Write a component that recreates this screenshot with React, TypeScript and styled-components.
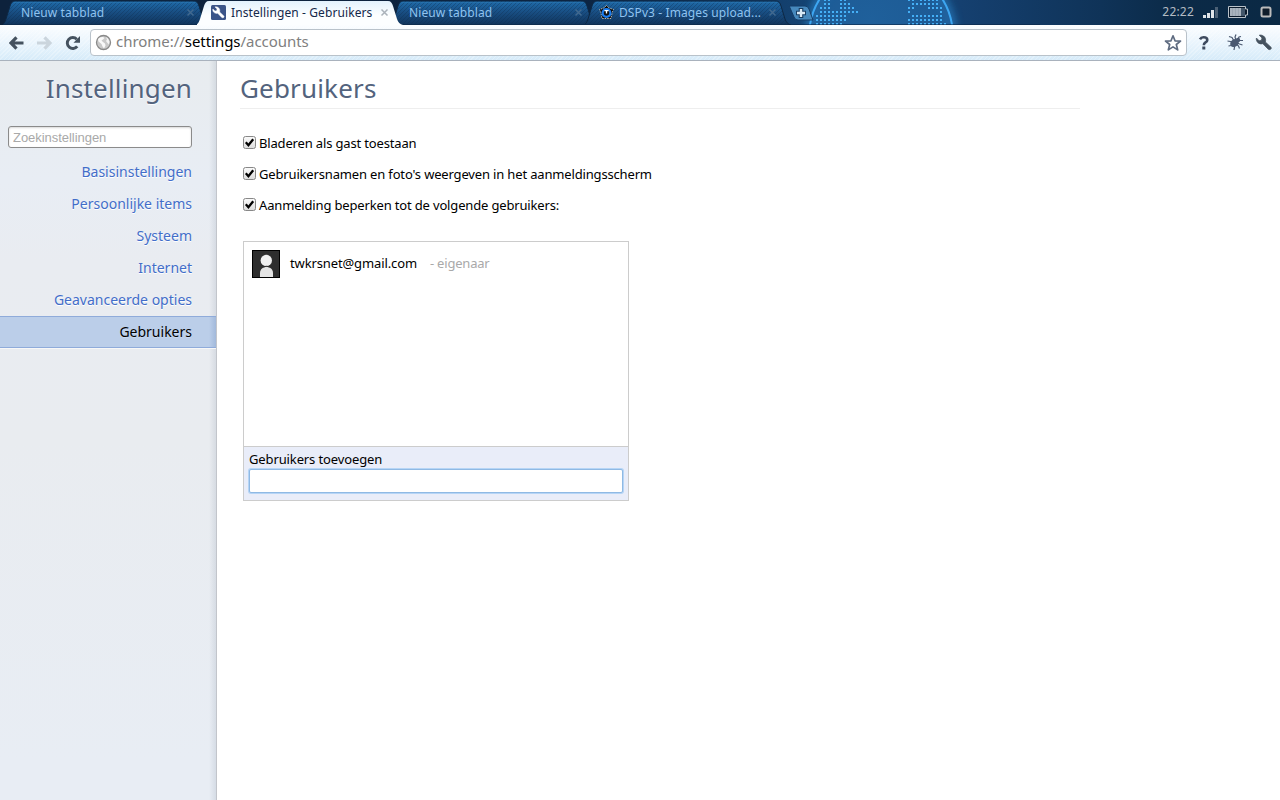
import React from "react";
import styled, { createGlobalStyle, css } from "styled-components";

const GlobalStyle = createGlobalStyle`
  * { box-sizing: border-box; }
  html, body { margin: 0; padding: 0; background: #fff; }
  body { font-family: "Noto Sans", sans-serif; font-size: 13px; color: #000; overflow: hidden; }
`;

const Window = styled.div`
  width: 1280px;
  height: 800px;
  display: flex;
  flex-direction: column;
`;

const TabStrip = styled.header`
  position: relative;
  flex: none;
  height: 25px;
  display: flex;
  align-items: flex-start;
  padding: 0 8px 0 3px;
  overflow: hidden;
  background: linear-gradient(90deg, #0d223c 0%, #0c2340 45%, #123c68 59%, #16487a 66%, #154070 75%, #0f3358 86%, #0b2a47 92%, #0b2944 100%);
`;

const Globe = styled.svg`
  position: absolute;
  left: 780px;
  top: 0;
`;

const TabBox = styled.div<{ $active?: boolean }>`
  position: relative;
  z-index: ${(p) => (p.$active ? 2 : 1)};
  flex: none;
  width: 206px;
  height: 25px;
  margin-right: -12px;
  padding: 0 14px 0 18px;
  display: flex;
  align-items: center;
  color: ${(p) => (p.$active ? "#14284a" : "#8fc3f0")};
`;

const TabShape = styled.svg`
  position: absolute;
  left: 0;
  top: 0;
`;

const TabIcon = styled.svg`
  position: relative;
  flex: none;
  margin: 0 5px 0 -4px;
`;

const TabTitle = styled.span`
  position: relative;
  flex: 1;
  white-space: nowrap;
  font-size: 12px;
  line-height: 24px;
  letter-spacing: 0.1px;
`;

const CloseIcon = styled.svg`
  position: relative;
  flex: none;
`;

const NewTab = styled.svg`
  position: relative;
  flex: none;
  margin: 5px 0 0 9px;
`;

const Status = styled.div`
  position: relative;
  margin-left: auto;
  height: 24px;
  display: flex;
  align-items: center;
  color: #b4bcc4;
  font-size: 12px;
  line-height: 24px;
  letter-spacing: 0.2px;
`;

const StatusIcon = styled.svg<{ $gap: number }>`
  flex: none;
  margin-left: ${(p) => p.$gap}px;
`;

const Toolbar = styled.div`
  flex: none;
  height: 36px;
  display: flex;
  align-items: center;
  border-bottom: 1px solid #a9b2bd;
  background: repeating-linear-gradient(135deg, rgba(255,255,255,0.25) 0 1px, transparent 1px 3px),
    linear-gradient(#fbfdff, #eaf5fd 50%, #d6ebf9);
  padding: 0 7px 0 9px;
`;

const ToolIcon = styled.svg<{ $left?: number; $right?: number }>`
  flex: none;
  margin: 0 ${(p) => p.$right ?? 0}px 0 ${(p) => p.$left ?? 0}px;
`;

const Omnibox = styled.div`
  flex: none;
  width: 1097px;
  height: 27px;
  display: flex;
  align-items: center;
  padding: 0 4px;
  background: #fff;
  border: 1px solid #b9c2ca;
  border-radius: 4px;
`;

const Url = styled.div`
  flex: 1;
  margin: -3px 0 0 4px;
  font-size: 15px;
  line-height: 24px;
  letter-spacing: -0.04px;
  color: #808080;
  b { font-weight: 400; color: #000; }
`;

const Page = styled.div`
  flex: 1;
  display: flex;
  min-height: 0;
`;

const Sidebar = styled.nav`
  flex: none;
  width: 217px;
  border-right: 1px solid #c2c5cb;
  background: linear-gradient(90deg, transparent 209px, rgba(120,135,155,0.17) 216px),
    linear-gradient(#e8ecef, #e8edf4 120px, #e9ecf1 200px, #e9ecf0 380px, #e8edf4 700px);
  text-align: right;
`;

const headingText = css`
  margin: 0;
  font-size: 26px;
  font-weight: 400;
  line-height: 36px;
  letter-spacing: 0.17px;
  color: #53637d;
`;

const SideTitle = styled.h1`
  ${headingText}
  padding: 9px 24px 0 0;
  text-shadow: 0 1px 1px #fff;
`;

const Search = styled.input`
  display: block;
  width: 184px;
  height: 22px;
  margin: 20px 0 8px 8px;
  padding: 0 4px;
  border: 1px solid #8b8b8b;
  border-radius: 3px;
  background: #fff;
  box-shadow: inset 0 1px 2px rgba(0, 0, 0, 0.15);
  font: 13px "Liberation Sans", sans-serif;
  letter-spacing: -0.04px;
  outline: none;
  &::placeholder { color: #a9a9a9; opacity: 1; }
`;

const NavItem = styled.div<{ $selected?: boolean }>`
  height: 32px;
  padding-right: 24px;
  font-size: 14px;
  line-height: 30px;
  border: solid transparent;
  border-width: 1px 0;
  color: #426dc9;
  text-shadow: 0 1px 0 #fff;
  ${(p) =>
    p.$selected &&
    css`
      color: #000;
      border-color: #8fabda;
      background: linear-gradient(90deg, transparent 209px, rgba(70,110,170,0.22) 216px), #bbcee9;
      box-shadow: 0 1px 0 #f7f7f7;
      text-shadow: 0 1px 0 #c8d8f0;
    `}
`;

const Main = styled.main`
  width: 863px;
  padding: 9px 0 0 23px;
`;

const Title = styled.h2`
  ${headingText}
  height: 39px;
  border-bottom: 1px solid #eee;
`;

const Options = styled.div`
  padding: 24px 0 0 3px;
`;

const Option = styled.label`
  display: flex;
  align-items: center;
  height: 20px;
  margin-bottom: 11px;
  line-height: 20px;
  letter-spacing: -0.16px;
  white-space: nowrap;
`;

const CheckMark = styled.svg`
  flex: none;
  margin: -2px 3px 0 0;
`;

const UserBox = styled.section`
  width: 386px;
  height: 260px;
  margin: 26px 0 0 3px;
  display: flex;
  flex-direction: column;
  border: 1px solid #ccc;
  letter-spacing: -0.12px;
`;

const UserList = styled.div`
  flex: 1;
  padding: 8px;
`;

const UserRow = styled.div`
  display: flex;
  align-items: center;
  height: 28px;
`;

const UserName = styled.span`
  margin: -3px 0 0 10px;
`;

const Owner = styled.span`
  margin: -3px 0 0 13px;
  letter-spacing: -0.2px;
  color: #a9a9a9;
`;

const AddUser = styled.div`
  height: 54px;
  padding: 3px 5px 0;
  border-top: 1px solid #ccc;
  background: #e9edf9;
  line-height: 19px;
`;

const AddInput = styled.input`
  display: block;
  width: 374px;
  height: 24px;
  border: 1px solid #8fb9e4;
  border-radius: 2px;
  background: #fff;
  box-shadow: 0 0 0 1px #b6d5f6;
  outline: none;
`;

const wrenchPath =
  "M15.500 13.200L9.900 8C10.600 5.900 9.900 3.400 8.100 2.100C6.700 1.100 5 .8 3.700 1.200L6.500 4L5.900 6.200L3.700 6.800L.9 4C.5 5.500 1 7.200 2.100 8.400C3.500 9.800 5.500 10.200 7.300 9.700L12.700 15.200C14.300 16.600 16.800 14.600 15.500 13.200Z";

type TabProps = { title: string; active?: boolean; icon?: React.ReactNode };

function Tab({ title, active, icon }: TabProps) {
  return (
    <TabBox $active={active}>
      <TabShape width="206" height="25">
        <defs>
          <linearGradient id="tabBlue" x1="0" y1="0" x2="0" y2="1">
            <stop offset="0" stopColor="#1f6cab" />
            <stop offset="0.5" stopColor="#184c80" />
            <stop offset="1" stopColor="#10345b" />
          </linearGradient>
          <linearGradient id="tabLight" x1="0" y1="0" x2="0" y2="1">
            <stop offset="0" stopColor="#e3f2fd" />
            <stop offset="0.6" stopColor="#fcfeff" />
          </linearGradient>
          <pattern id="hatch" width="4" height="4" patternUnits="userSpaceOnUse">
            <path d="M0 4L4 0" stroke="#0c2d50" strokeWidth="1" opacity="0.35" />
          </pattern>
        </defs>
        <path
          d="M-2 25C1 24.500 2 22 3 19L7 6C8 3 9 1 12 1H191C194 1 195 3 196 6L200 19C201 22 203 24.500 206 25Z"
          fill={active ? "url(#tabLight)" : "url(#tabBlue)"}
          stroke={active ? "none" : "#0d2743"}
        />
        {!active && <path d="M2 24L7 6C8 3 9 1 12 1H191C194 1 195 3 196 6L202 24Z" fill="url(#hatch)" />}
        {!active && <path d="M11 2.500H192" stroke="#2a76b1" opacity="0.6" />}
      </TabShape>
      {icon}
      <TabTitle>{title}</TabTitle>
      <CloseIcon width="9" height="9" viewBox="0 0 9 9">
        <path d="M1.500 1.500L7.500 7.500M7.500 1.500L1.500 7.500" stroke={active ? "#aab2ba" : "#41698f"} strokeWidth="1.500" />
      </CloseIcon>
    </TabBox>
  );
}

/* Runs of lit dots on the world map, 4px apart: [y, first x, last x]. */
const dotRuns: [number, number, number][] = [
  [-1, 824, 828], [-1, 840, 844], [-1, 908, 912], [-1, 920, 936],
  [3, 824, 828], [3, 840, 848], [3, 912, 936],
  [7, 820, 828], [7, 840, 852], [7, 908, 912], [7, 928, 940],
  [11, 820, 832], [11, 836, 856], [11, 908, 908], [11, 940, 940],
  [15, 816, 844], [15, 912, 940],
  [19, 816, 844], [19, 908, 940],
  [23, 816, 840], [23, 908, 944],
];

function GlobeArt() {
  return (
    <Globe width="260" height="25" viewBox="780 0 260 25">
      <defs>
        <radialGradient id="globeFill" gradientUnits="userSpaceOnUse" cx="870" cy="20" r="72">
          <stop offset="0" stopColor="#1f609b" />
          <stop offset="1" stopColor="#1d5a94" />
        </radialGradient>
        <filter id="glow" x="-20%" y="-20%" width="140%" height="140%">
          <feGaussianBlur stdDeviation="4" />
        </filter>
      </defs>
      <circle cx="881" cy="37" r="72" fill="none" stroke="#2b86cc" strokeWidth="7" opacity="0.7" filter="url(#glow)" />
      <circle cx="881" cy="37" r="72" fill="url(#globeFill)" stroke="#3fa9f5" strokeWidth="2" />
      <circle cx="881" cy="37" r="69" fill="none" stroke="#3290d8" strokeWidth="4" opacity="0.4" filter="url(#glow)" />
      {dotRuns.map(([y, from, to]) => {
        const dots: React.ReactNode[] = [];
        for (let x = from; x <= to; x += 4) {
          dots.push(<rect key={`${x},${y}`} x={x} y={y} width="2" height="2" fill="#45b0f7" />);
        }
        return dots;
      })}
      <path d="M780 24.500H1040" stroke="#0b2748" opacity="0.6" />
    </Globe>
  );
}

function Checkbox() {
  return (
    <CheckMark width="13" height="13" viewBox="0 0 13 13">
      <defs>
        <linearGradient id="box" x1="0" y1="0" x2="0" y2="1">
          <stop offset="0" stopColor="#fbfbfb" />
          <stop offset="1" stopColor="#dcdcdc" />
        </linearGradient>
      </defs>
      <rect x="0.5" y="0.5" width="12" height="12" rx="2" fill="url(#box)" stroke="#888" />
      <path d="M2.800 6.300L5.400 9.200L10.200 3.200" fill="none" stroke="#000" strokeWidth="2.300" />
    </CheckMark>
  );
}

function Avatar() {
  return (
    <svg width="28" height="28" viewBox="0 0 28 28">
      <rect x="0.5" y="0.5" width="27" height="27" fill="#2e2e2e" stroke="#000" />
      <circle cx="14.300" cy="10.500" r="5.700" fill="#f0f0f0" />
      <path d="M8 27V23C8 15 21 15 21 23V27Z" fill="#e4e4e4" />
      <path d="M9 17Q14.500 15.500 20 17" stroke="#2e2e2e" fill="none" />
    </svg>
  );
}

export default function App() {
  const items = ["Basisinstellingen", "Persoonlijke items", "Systeem", "Internet", "Geavanceerde opties", "Gebruikers"];
  const options = [
    "Bladeren als gast toestaan",
    "Gebruikersnamen en foto's weergeven in het aanmeldingsscherm",
    "Aanmelding beperken tot de volgende gebruikers:",
  ];
  return (
    <Window>
      <GlobalStyle />
      <TabStrip>
        <GlobeArt />
        <Tab title="Nieuw tabblad" />
        <Tab
          active
          title="Instellingen - Gebruikers"
          icon={
            <TabIcon width="15" height="15" viewBox="0 0 15 15">
              <rect width="15" height="15" rx="1.500" fill="#3a5488" />
              <path d={wrenchPath} fill="#fff" stroke="#fff" strokeWidth=".6" transform="translate(1.200 1) scale(.75)" />
            </TabIcon>
          }
        />
        <Tab title="Nieuw tabblad" />
        <Tab
          title="DSPv3 - Images upload..."
          icon={
            <TabIcon width="15" height="15" viewBox="0 0 15 15">
              <path d="M7.500 .5L10 3L14.500 4.500L13 8L12 13.500H3L2 8L.5 4.500L5 3Z" fill="#080808" stroke="#c9c4b8" strokeDasharray="1.500 1" strokeWidth=".9" />
              <circle cx="7.500" cy="8" r="3.900" fill="#111" stroke="#1b7df0" strokeWidth="2.300" />
              <path d="M5.500 5.700H9.500M7.500 5.700V8.500" stroke="#fff" strokeWidth="1.300" />
            </TabIcon>
          }
        />
        <NewTab width="27" height="16" viewBox="0 0 27 16">
          <path d="M1.500 1H17Q20 1 21 4L25 15H10Q7 15 6 12L2.500 4Q1.500 2 1.500 1Z" fill="#4789bd" stroke="#143d68" />
          <path d="M13 3V13M8 8H18" stroke="#173c62" strokeWidth="4.600" />
          <path d="M13 4V12M9 8H17" stroke="#d9e9f5" strokeWidth="2.400" />
        </NewTab>
        <Status>
          22:22
          <StatusIcon $gap={9} width="16" height="13" viewBox="0 0 16 13">
            <path d="M0 9H3V12H0ZM4 7H7V12H4ZM8 4H11V12H8Z" fill="#dfe4e8" />
            <path d="M12 1H15V12H12Z" fill="#4b6075" />
          </StatusIcon>
          <StatusIcon $gap={9} width="20" height="12" viewBox="0 0 20 12">
            <path d="M.5 .5H17.500V3H19.500V9H17.500V11.500H.5Z" fill="#0a1a2b" stroke="#b9c2ca" />
            <rect x="2" y="2" width="11" height="8" fill="#a7b2bd" />
            <path d="M4.500 2V10M7.500 2V10M10.500 2V10" stroke="#8f9ba8" strokeWidth=".6" />
            <rect x="13" y="2" width="4" height="8" fill="#42566a" />
          </StatusIcon>
          <StatusIcon $gap={12} width="12" height="12" viewBox="0 0 12 12">
            <rect x="1.500" y="1.500" width="9" height="9" rx="1.500" fill="#101d2b" stroke="#bcbcbc" strokeWidth="2" />
          </StatusIcon>
        </Status>
      </TabStrip>
      <Toolbar>
        <ToolIcon $right={12} width="16" height="14" viewBox="0 0 16 14">
          <path d="M7.500 1.300L2 7L7.500 12.700M2.500 7H14.500" fill="none" stroke="#45525f" strokeWidth="3.200" />
        </ToolIcon>
        <ToolIcon $right={12} width="16" height="14" viewBox="0 0 16 14">
          <path d="M7.500 1.300L13 7L7.500 12.700M12.500 7H0" fill="none" stroke="#cbd5dd" strokeWidth="3.200" />
        </ToolIcon>
        <ToolIcon $right={8} width="17" height="16" viewBox="0 0 17 16">
          <path d="M12.200 11.300A5.500 5.500 0 1 1 11.800 4.200" fill="none" stroke="#45525f" strokeWidth="2.900" />
          <path d="M15 1V7.700H8.500Z" fill="#45525f" />
        </ToolIcon>
        <Omnibox>
          <svg width="17" height="17" viewBox="0 0 17 17">
            <circle cx="8.500" cy="8.500" r="7" fill="#c9c9c9" stroke="#8a8a8a" strokeWidth="1.300" />
            <path d="M3 5Q5 2.500 8 3L9.500 4L8 5.500L6.500 6.500L8 8L10 9.500L10.500 11.500L9 14.500L7.500 12.500L6.500 10L3.500 7.500Z" fill="#f9f9f9" />
            <path d="M11 3L13 4.500L14.500 7.500L14 10.500L12.500 9L11 7L12 5.500Z" fill="#f4f4f4" />
          </svg>
          <Url>
            chrome://<b>settings</b>/accounts
          </Url>
          <svg width="18" height="18" viewBox="0 0 18 18">
            <path d="M9 1.800L11 6.800L16.500 7.100L12.300 10.500L13.700 15.900L9 12.900L4.300 15.900L5.700 10.500L1.500 7.100L7 6.800Z" fill="#fff" stroke="#5e6b80" strokeWidth="1.700" strokeLinejoin="round" />
          </svg>
        </Omnibox>
        <ToolIcon $left={11} width="12" height="16" viewBox="0 0 12 16">
          <path d="M2 4.300Q3 2.300 5.500 2.300Q9.300 2.300 9.300 4.900Q9.300 6.300 7.500 7.400Q5.800 8.500 5.800 10.300" fill="none" stroke="#3e4a5e" strokeWidth="2.600" />
          <rect x="4.300" y="11.500" width="3" height="3" fill="#3e4a5e" />
        </ToolIcon>
        <ToolIcon $left={17} width="17" height="17" viewBox="0 0 17 17">
          <path d="M2 2.500L5 3.500L7 7M9 .5L8 3L9 6M14 2.500L12 3L10 7M16 6.500H13L9 8M15.500 11L12.500 10L9 8.500M12.500 14.500L11.500 12L8.500 9M7 16L7.500 13V9M1.500 12L4 11.500L7 9M.5 7L3.500 7.500L7 8.500" fill="none" stroke="#4a5870" strokeWidth="1.200" />
          <ellipse cx="7.500" cy="9" rx="4.600" ry="3.700" transform="rotate(-35 7.500 9)" fill="#4a5870" />
          <circle cx="11" cy="6" r="2.200" fill="#4a5870" />
        </ToolIcon>
        <ToolIcon $left={11} width="18" height="17" viewBox="0 0 17 17">
          <path d={wrenchPath} fill="#45525f" stroke="#45525f" strokeWidth=".7" />
        </ToolIcon>
      </Toolbar>
      <Page>
        <Sidebar>
          <SideTitle>Instellingen</SideTitle>
          <Search placeholder="Zoekinstellingen" />
          {items.map((t) => (
            <NavItem key={t} $selected={t === "Gebruikers"}>{t}</NavItem>
          ))}
        </Sidebar>
        <Main>
          <Title>Gebruikers</Title>
          <Options>
            {options.map((t) => (
              <Option key={t}><Checkbox />{t}</Option>
            ))}
          </Options>
          <UserBox>
            <UserList>
              <UserRow>
                <Avatar />
                <UserName>twkrsnet@gmail.com</UserName>
                <Owner>- eigenaar</Owner>
              </UserRow>
            </UserList>
            <AddUser>
              Gebruikers toevoegen
              <AddInput />
            </AddUser>
          </UserBox>
        </Main>
      </Page>
    </Window>
  );
}
